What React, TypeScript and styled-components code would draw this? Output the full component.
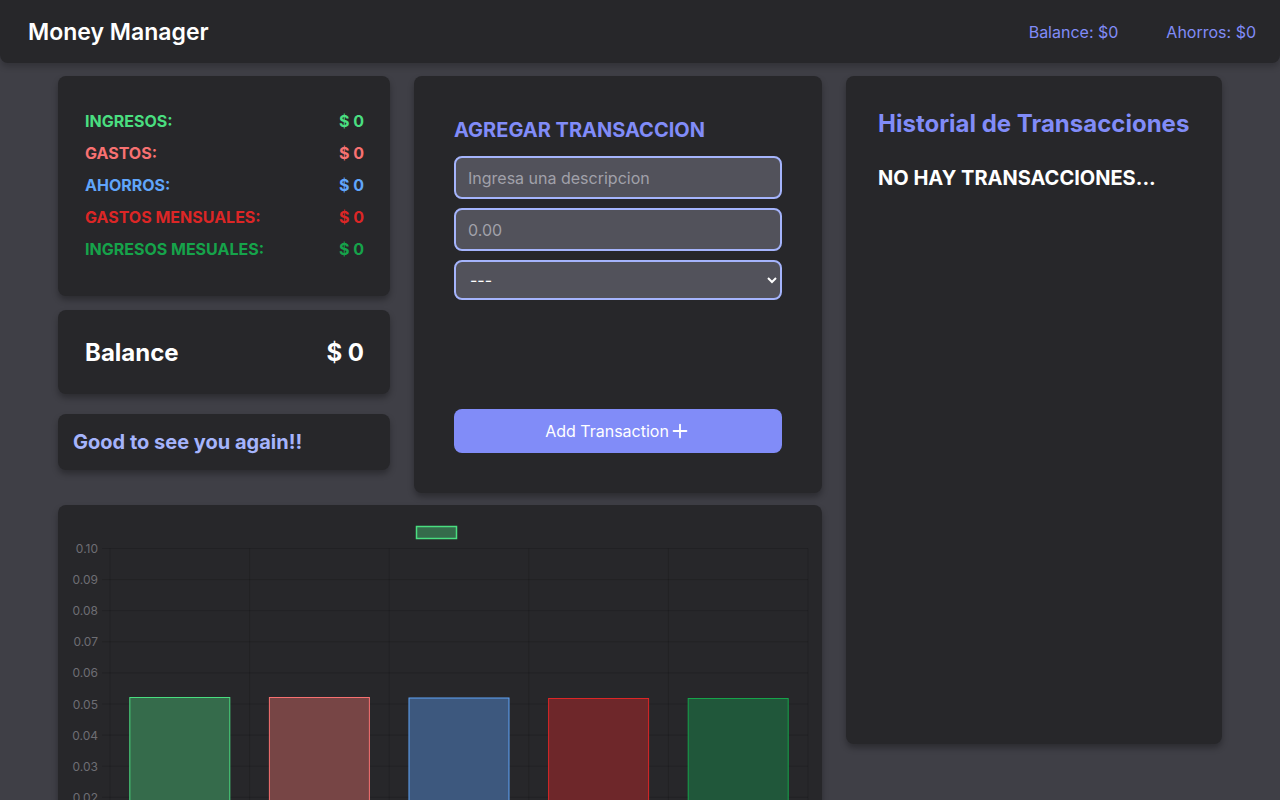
import styled, { createGlobalStyle } from 'styled-components';
import { Plus } from 'lucide-react';

const colors = {
    page: '#3f3f46',
    card: '#27272a',
    field: '#52525b',
    indigo: '#818cf8',
    indigoLight: '#a5b4fc',
    white: '#ffffff',
};

type SummaryItem = {
    label: string;
    value: string;
    color: string;
};

type BarItem = {
    fill: string;
    border: string;
    top: number;
};

const summary: SummaryItem[] = [
    { label: 'INGRESOS:', value: '$ 0', color: '#4ade80' },
    { label: 'GASTOS:', value: '$ 0', color: '#f87171' },
    { label: 'AHORROS:', value: '$ 0', color: '#60a5fa' },
    { label: 'GASTOS MENSUALES:', value: '$ 0', color: '#dc2626' },
    { label: 'INGRESOS MESUALES:', value: '$ 0', color: '#16a34a' },
];

const bars: BarItem[] = [
    { fill: '#356b4b', border: '#4ade80', top: 192.5 },
    { fill: '#774545', border: '#f87171', top: 192.5 },
    { fill: '#3d587e', border: '#60a5fa', top: 193 },
    { fill: '#6e272a', border: '#dc2626', top: 193.5 },
    { fill: '#20573a', border: '#16a34a', top: 193.5 },
];

const ticks = ['0.10', '0.09', '0.08', '0.07', '0.06', '0.05', '0.04', '0.03', '0.02', '0.01', '0.00'];

// chart geometry, in card pixels
const chartLeft = 52;
const chartTop = 43.5;
const step = 31.1;
const colWidth = 139.6;
const chartBottom = chartTop + step * 10;

function BarChart() {
    return (
        <svg width="764" height="390" viewBox="0 0 764 390">
            <rect x="358.5" y="21.5" width="40" height="12" fill="#356b4b" stroke="#4ade80" strokeWidth="1.5" />
            {ticks.map((t, i) => {
                const y = chartTop + i * step;
                return (
                    <g key={t}>
                        <line x1={chartLeft - 8} x2={chartLeft + colWidth * 5} y1={y} y2={y} stroke="rgba(0,0,0,0.14)" />
                        <text x="40" y={y + 4.5} textAnchor="end" fontSize="12" fill="#6e6e74" fontFamily="Inter, sans-serif">
                            {t}
                        </text>
                    </g>
                );
            })}
            {[0, 1, 2, 3, 4, 5].map((k) => (
                <line
                    key={k}
                    x1={chartLeft + k * colWidth}
                    x2={chartLeft + k * colWidth}
                    y1={chartTop}
                    y2={chartBottom + 8}
                    stroke="rgba(0,0,0,0.14)"
                />
            ))}
            {bars.map((b, k) => (
                <rect
                    key={k}
                    x={chartLeft + k * colWidth + 19.8}
                    y={b.top}
                    width="100"
                    height={chartBottom - b.top}
                    fill={b.fill}
                    stroke={b.border}
                    strokeWidth="1"
                />
            ))}
        </svg>
    );
}

function App() {
    return (
        <>
            <GlobalStyle />
            <Header>
                <Brand>Money Manager</Brand>
                <HeaderStats>
                    <HeaderStat>Balance: $0</HeaderStat>
                    <HeaderStat>Ahorros: $0</HeaderStat>
                </HeaderStats>
            </Header>
            <Layout>
                <LeftColumn>
                    <SummaryCard>
                        {summary.map((s) => (
                            <SummaryRow key={s.label} color={s.color}>
                                <span>{s.label}</span>
                                <span>{s.value}</span>
                            </SummaryRow>
                        ))}
                    </SummaryCard>
                    <BalanceCard>
                        <span>Balance</span>
                        <span>$ 0</span>
                    </BalanceCard>
                    <GreetingCard>Good to see you again!!</GreetingCard>
                </LeftColumn>
                <FormCard>
                    <FormTitle>AGREGAR TRANSACCION</FormTitle>
                    <Field type="text" placeholder="Ingresa una descripcion" />
                    <Field type="text" placeholder="0.00" />
                    <Select defaultValue="">
                        <option value="">---</option>
                        <option value="ingreso">Ingreso</option>
                        <option value="gasto">Gasto</option>
                        <option value="ahorro">Ahorro</option>
                    </Select>
                    <AddButton type="button">
                        Add Transaction
                        <Plus size={22} strokeWidth={2} />
                    </AddButton>
                </FormCard>
                <HistoryCard>
                    <HistoryTitle>Historial de Transacciones</HistoryTitle>
                    <EmptyText>NO HAY TRANSACCIONES...</EmptyText>
                </HistoryCard>
                <ChartCard>
                    <BarChart />
                </ChartCard>
            </Layout>
        </>
    );
}

export default App;

const GlobalStyle = createGlobalStyle`
    * {
        box-sizing: border-box;
    }
    body {
        margin: 0;
        background-color: ${colors.page};
        font-family: Inter, 'Noto Sans', sans-serif;
        color: ${colors.white};
    }
`;

const Header = styled.header`
    height: 63px;
    padding: 0 24px 0 28px;
    display: flex;
    align-items: center;
    justify-content: space-between;
    background-color: ${colors.card};
    border-radius: 0 0 8px 8px;
    box-shadow: 0 4px 6px rgba(0, 0, 0, 0.2);
`;

const Brand = styled.h1`
    margin: 0;
    font-size: 23px;
    font-weight: 600;
    line-height: 32px;
    padding-top: 1px;
`;

const HeaderStats = styled.div`
    display: flex;
    gap: 48px;
`;

const HeaderStat = styled.span`
    font-size: 16px;
    color: ${colors.indigo};
`;

const Layout = styled.main`
    width: 1164px;
    margin: 13px auto 0;
    display: grid;
    grid-template-columns: 332px 408px 376px;
    column-gap: 24px;
    row-gap: 12px;
    align-items: start;
`;

const Card = styled.section`
    background-color: ${colors.card};
    border-radius: 8px;
    box-shadow: 0 4px 6px rgba(0, 0, 0, 0.3);
`;

const LeftColumn = styled.div`
    display: flex;
    flex-direction: column;
`;

const SummaryCard = styled(Card)`
    height: 220px;
    padding: 33px 26px 0 27px;
    display: flex;
    flex-direction: column;
    gap: 8px;
`;

const SummaryRow = styled.div<{ color: string }>`
    display: flex;
    justify-content: space-between;
    font-size: 16px;
    font-weight: 700;
    line-height: 24px;
    color: ${(props) => props.color};
`;

const BalanceCard = styled(Card)`
    height: 84px;
    margin-top: 14px;
    padding: 0 26px 0 27px;
    display: flex;
    align-items: center;
    justify-content: space-between;
    font-size: 24px;
    font-weight: 700;
`;

const GreetingCard = styled(Card)`
    height: 56px;
    margin-top: 20px;
    padding: 0 15px;
    display: flex;
    align-items: center;
    font-size: 20px;
    font-weight: 700;
    color: ${colors.indigoLight};
`;

const FormCard = styled(Card)`
    height: 417px;
    padding: 40px;
    display: flex;
    flex-direction: column;
`;

const FormTitle = styled.h2`
    margin: 0 0 12px;
    font-size: 20px;
    font-weight: 700;
    line-height: 28px;
    color: ${colors.indigo};
`;

const Field = styled.input`
    height: 43px;
    margin-bottom: 9px;
    padding: 0 12px;
    width: 100%;
    font-family: inherit;
    font-size: 16px;
    color: ${colors.white};
    background-color: ${colors.field};
    border: 2px solid ${colors.indigoLight};
    border-radius: 8px;
    outline: none;

    &::placeholder {
        color: #a1a1aa;
    }
`;

const Select = styled.select`
    height: 40px;
    width: 100%;
    padding: 0 10px;
    font-family: inherit;
    font-size: 16px;
    color: ${colors.white};
    background-color: ${colors.field};
    border: 2px solid ${colors.indigoLight};
    border-radius: 8px;
    outline: none;
`;

const AddButton = styled.button`
    margin-top: 109px;
    height: 44px;
    width: 100%;
    display: flex;
    align-items: center;
    justify-content: center;
    font-family: inherit;
    font-size: 16px;
    color: ${colors.white};
    background-color: ${colors.indigo};
    border: none;
    border-radius: 8px;
    cursor: pointer;
`;

const HistoryCard = styled(Card)`
    grid-column: 3;
    grid-row: 1 / span 2;
    height: 668px;
    padding: 32px;
`;

const HistoryTitle = styled.h2`
    margin: 0 0 24px;
    font-size: 24px;
    font-weight: 700;
    line-height: 32px;
    color: ${colors.indigo};
`;

const EmptyText = styled.p`
    margin: 0;
    font-size: 20px;
    font-weight: 700;
    line-height: 28px;
`;

const ChartCard = styled(Card)`
    grid-column: 1 / span 2;
    height: 390px;
    overflow: hidden;
    display: flex;
`;
